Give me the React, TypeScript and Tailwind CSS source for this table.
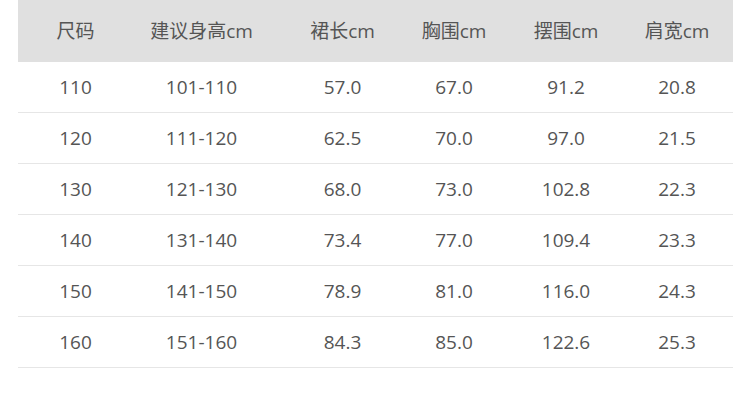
import React from 'react';

const headers = ['尺码', '建议身高cm', '裙长cm', '胸围cm', '摆围cm', '肩宽cm'];

const rows: string[][] = [
    ['110', '101-110', '57.0', '67.0', '91.2', '20.8'],
    ['120', '111-120', '62.5', '70.0', '97.0', '21.5'],
    ['130', '121-130', '68.0', '73.0', '102.8', '22.3'],
    ['140', '131-140', '73.4', '77.0', '109.4', '23.3'],
    ['150', '141-150', '78.9', '81.0', '116.0', '24.3'],
    ['160', '151-160', '84.3', '85.0', '122.6', '25.3'],
];

const gridCols = 'grid grid-cols-[115px_137px_145px_78px_146px_1fr]';

const App: React.FC = () => {
    return (
        <div
            className="w-[750px] h-[409px] bg-white pl-[18px] pr-[17px] text-[19px] text-[#555555]"
            style={{ fontFamily: '"Open Sans", "Noto Sans CJK SC", sans-serif' }}
        >
            <div className={`${gridCols} h-[62px] items-center bg-[#e0e0e0]`}>
                {headers.map((h, i) => (
                    <div key={h} className={`text-center ${i === 5 ? 'pr-[18px]' : ''}`}>{h}</div>
                ))}
            </div>
            {rows.map(row => (
                <div key={row[0]} className={`${gridCols} h-[51px] items-center border-b border-[#e6e6e6]`}>
                    {row.map((cell, i) => (
                        <div key={i} className={`text-center ${i === 5 ? 'pr-[18px]' : ''}`}>{cell}</div>
                    ))}
                </div>
            ))}
        </div>
    );
};

export default App;
